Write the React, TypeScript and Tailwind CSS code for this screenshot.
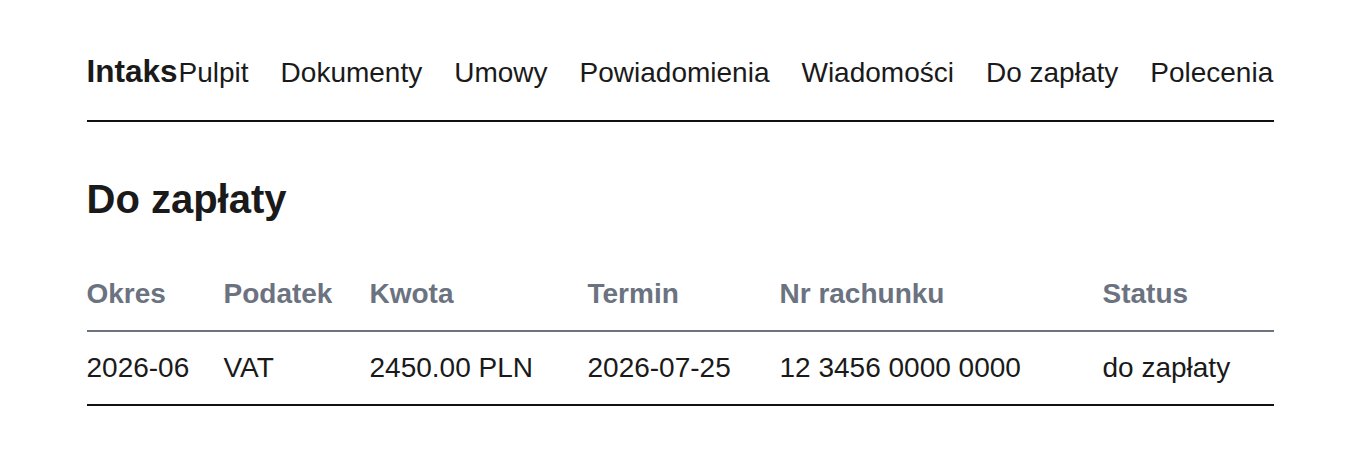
const navItems = ["Pulpit", "Dokumenty", "Umowy", "Powiadomienia", "Wiadomości", "Do zapłaty", "Polecenia"];

type Payment = {
  okres: string;
  podatek: string;
  kwota: string;
  termin: string;
  rachunek: string;
  status: string;
};

const payments: Payment[] = [
  {
    okres: "2026-06",
    podatek: "VAT",
    kwota: "2450.00 PLN",
    termin: "2026-07-25",
    rachunek: "12 3456 0000 0000",
    status: "do zapłaty",
  },
];

const columns = [
  { label: "Okres", w: "w-[137px]" },
  { label: "Podatek", w: "w-[146px]" },
  { label: "Kwota", w: "w-[218px]" },
  { label: "Termin", w: "w-[192px]" },
  { label: "Nr rachunku", w: "w-[323px]" },
  { label: "Status", w: "w-[171px]" },
];

export default function App() {
  return (
    <div className="min-h-[464px] bg-white text-[#1a1a1a] font-['Liberation_Sans',Arial,sans-serif]">
      <div className="mx-auto w-[1187px]">
        <header className="flex items-baseline whitespace-nowrap pt-[54px] pb-[30px] border-b-2 border-[#111]">
          <span className="text-[31.5px] leading-[34px] font-bold">Intaks</span>
          <nav className="ml-[1px] flex items-baseline gap-8 text-[28px] leading-[34px]">
            {navItems.map((item) => (
              <a key={item} href="#" className="shrink-0">
                {item}
              </a>
            ))}
          </nav>
        </header>

        <h1 className="mt-[53px] text-[40px] leading-[48px] font-bold">Do zapłaty</h1>

        <table className="mt-[35px] w-full table-fixed border-collapse text-left text-[28px] leading-[34px]">
          <thead>
            <tr className="border-b-2 border-[#6b7280]">
              {columns.map((c) => (
                <th key={c.label} className={`${c.w} py-[19px] font-bold text-[#6b7280]`}>
                  {c.label}
                </th>
              ))}
            </tr>
          </thead>
          <tbody>
            {payments.map((p) => (
              <tr key={p.okres + p.podatek} className="border-b-2 border-[#111]">
                <td className="py-[19px]">{p.okres}</td>
                <td className="py-[19px]">{p.podatek}</td>
                <td className="py-[19px]">{p.kwota}</td>
                <td className="py-[19px]">{p.termin}</td>
                <td className="py-[19px]">{p.rachunek}</td>
                <td className="py-[19px]">{p.status}</td>
              </tr>
            ))}
          </tbody>
        </table>
      </div>
    </div>
  );
}
